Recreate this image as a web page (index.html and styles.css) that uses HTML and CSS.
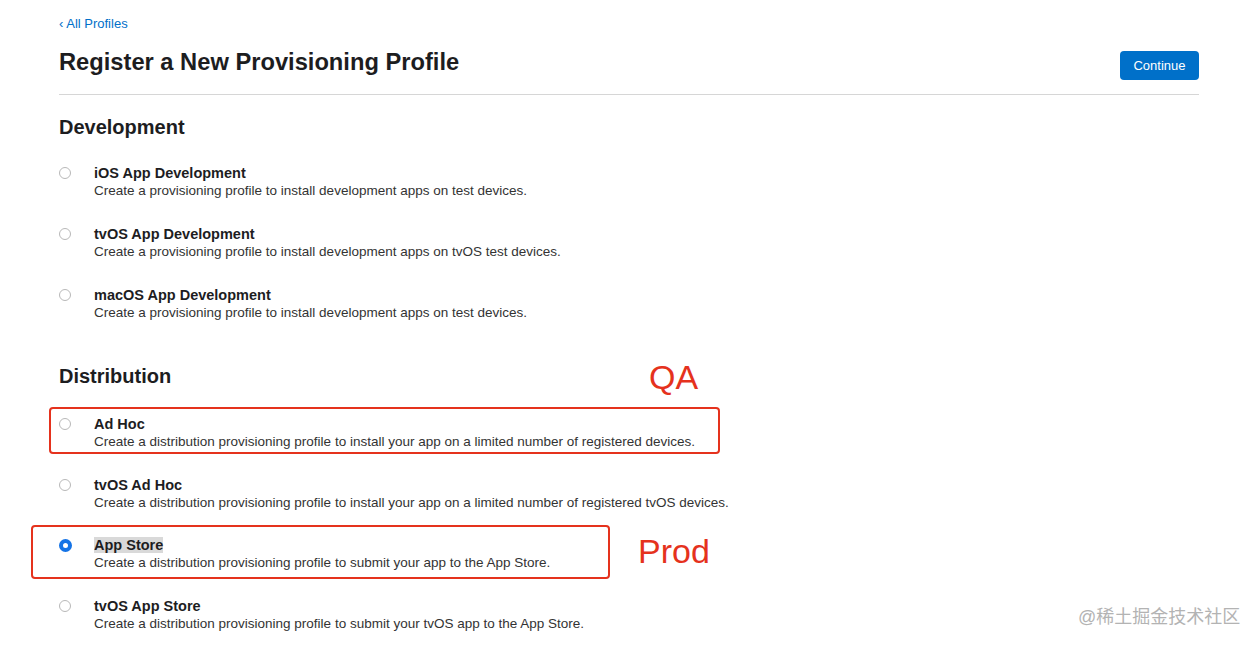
FILE: index.html
```html
<!DOCTYPE html>
<html>
<head>
<meta charset="utf-8">
<link rel="stylesheet" href="styles.css">
</head>
<body>
<div class="page">
  <a class="back" href="#">‹ All Profiles</a>
  <div class="header">
    <h1 class="title">Register a New Provisioning Profile</h1>
    <button class="btn">Continue</button>
  </div>
  <section class="group">
    <h2 class="group-title">Development</h2>
    <div class="option"><span class="radio"></span><div class="text"><div class="name">iOS App Development</div><div class="desc">Create a provisioning profile to install development apps on test devices.</div></div></div>
    <div class="option"><span class="radio"></span><div class="text"><div class="name">tvOS App Development</div><div class="desc">Create a provisioning profile to install development apps on tvOS test devices.</div></div></div>
    <div class="option"><span class="radio"></span><div class="text"><div class="name">macOS App Development</div><div class="desc">Create a provisioning profile to install development apps on test devices.</div></div></div>
  </section>
  <section class="group dist">
    <h2 class="group-title">Distribution</h2>
    <div class="option"><span class="radio"></span><div class="text"><div class="name">Ad Hoc</div><div class="desc">Create a distribution provisioning profile to install your app on a limited number of registered devices.</div></div></div>
    <div class="option"><span class="radio"></span><div class="text"><div class="name">tvOS Ad Hoc</div><div class="desc">Create a distribution provisioning profile to install your app on a limited number of registered tvOS devices.</div></div></div>
    <div class="option"><span class="radio checked"></span><div class="text"><div class="name"><span class="sel">App Store</span></div><div class="desc">Create a distribution provisioning profile to submit your app to the App Store.</div></div></div>
    <div class="option"><span class="radio"></span><div class="text"><div class="name">tvOS App Store</div><div class="desc">Create a distribution provisioning profile to submit your tvOS app to the App Store.</div></div></div>
  </section>
</div>
<div class="mark box-qa"></div>
<div class="mark box-prod"></div>
<div class="note note-qa">QA</div>
<div class="note note-prod">Prod</div>
<div class="watermark">@稀土掘金技术社区</div>
</body>
</html>
```
FILE: styles.css
```css
html, body { margin: 0; padding: 0; background: #fff; }
body { font-family: "Liberation Sans", Arial, sans-serif; color: #1d1d1f; position: relative; height: 647px; overflow: hidden; }
.page { width: 1140px; margin-left: 59px; padding-top: 16px; }
.back { display: block; color: #0070c9; text-decoration: none; font-size: 13px; line-height: 16px; }
.header { display: flex; justify-content: space-between; align-items: flex-start; padding-top: 15px; padding-bottom: 14px; border-bottom: 1px solid #d6d6d6; }
.title { margin: 0; font-size: 23.7px; line-height: 30px; font-weight: 700; }
.btn { margin-top: 4px; background: #0070c9; color: #fff; border: none; border-radius: 4px; height: 29px; width: 79px; font-family: inherit; font-size: 13px; padding: 0; }
.group-title { margin: 0; font-size: 20px; line-height: 24px; font-weight: 700; }
.group { padding-top: 20px; }
.group .group-title { margin-bottom: 25px; }
.dist { padding-top: 17px; }
.dist .group-title { margin-bottom: 27px; }
.option { display: flex; align-items: flex-start; height: 61px; }
.dist .option { height: 60.5px; }
.radio { width: 12px; height: 12px; border-radius: 50%; border: 1px solid #b8b8b8; box-sizing: border-box; margin-top: 3px; flex: none; background: #fff; }
.radio.checked { border: 4px solid #1473e6; width: 13px; height: 13px; margin-top: 3px; margin-right: -1px; }
.text { margin-left: 23px; }
.name { font-size: 14.5px; line-height: 18px; font-weight: 700; }
.sel { background: #d9d9d9; }
.desc { font-size: 13.5px; line-height: 18px; color: #333; }
.mark { position: absolute; border: 2px solid #e5321d; border-radius: 4px; }
.box-qa { left: 49px; top: 407px; width: 667px; height: 43px; }
.box-prod { left: 31px; top: 525px; width: 575px; height: 50px; }
.note { position: absolute; color: #e5321d; font-size: 34px; line-height: 34px; }
.note-qa { left: 649px; top: 360px; }
.note-prod { left: 638px; top: 534px; }
.watermark { position: absolute; left: 1078px; top: 607px; color: #b3b3b3; font-size: 18px; line-height: 20px; font-family: "Liberation Sans", "Noto Sans CJK SC", sans-serif; }
```
